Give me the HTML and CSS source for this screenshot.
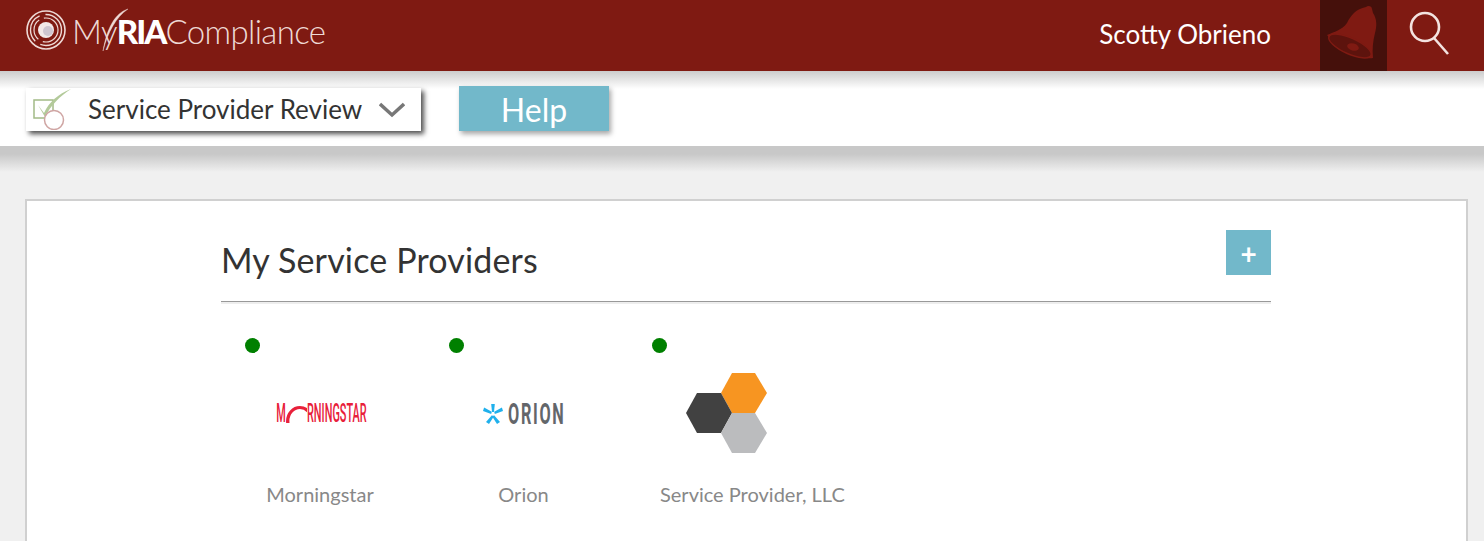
FILE: index.html
```html
<!DOCTYPE html>
<html lang="en">
<head>
  <meta charset="UTF-8">
  <title>My Service Providers - MyRIACompliance</title>
  <link rel="stylesheet" href="styles.css">
</head>
<body>

  <header class="topbar">
    <a class="brand" href="#">
      <svg class="brand-mark" width="42" height="42" viewBox="0 0 42 42" fill="none">
        <circle cx="21" cy="21" r="19" stroke="#eed9d5" stroke-width="1.6"/>
        <circle cx="21" cy="21" r="15.5" stroke="#eed9d5" stroke-width="1.4" stroke-dasharray="30 6"/>
        <circle cx="21" cy="21" r="12" stroke="#eed9d5" stroke-width="1.2" stroke-dasharray="22 5"/>
        <circle cx="21" cy="21" r="8" fill="#f3e9e8"/>
        <circle cx="23" cy="22" r="5" fill="#cfc6d0"/>
      </svg>
      <span class="brand-name">My<b>RIA</b>Compliance</span>
      <svg class="brand-swoosh" width="30" height="46" viewBox="0 0 30 46" fill="none">
        <path d="M30 1C17 5 9 20 5 43C10 24 18 9 30 1Z" fill="#eed9d5" stroke="#eed9d5" stroke-width="0.4"/>
      </svg>
    </a>
    <div class="user-name">Scotty Obrieno</div>
    <a class="bell" href="#">
      <svg width="67" height="71" viewBox="0 0 67 71">
        <path d="M46 7C48 5 52 6 52 9L53 13C57 19 57 26 55 33C53 41 52 49 53 58C43 60 20 52 7 35C14 32 22 30 27 23C31 15 36 9 46 7Z" fill="#7f1a12"/>
        <ellipse cx="30" cy="46" rx="23" ry="8" transform="rotate(24 30 46)" fill="#5d130d" stroke="#7f1a12" stroke-width="1.5"/>
        <ellipse cx="33" cy="47" rx="6" ry="3.5" transform="rotate(15 33 47)" fill="#7f1a12"/>
      </svg>
    </a>
    <a class="search" href="#">
      <svg width="40" height="50" viewBox="0 0 40 50" fill="none" stroke="#f3e3e0">
        <circle cx="16" cy="17" r="14" stroke-width="2.6"/>
        <path d="M25 28L39 44" stroke-width="2.6"/>
      </svg>
    </a>
  </header>

  <div class="subbar">
    <div class="module-select">
      <svg class="module-icon" width="40" height="42" viewBox="0 0 40 42" fill="none">
        <rect x="1" y="12" width="19" height="18" stroke="#a3bb87" stroke-width="1.5"/>
        <path d="M5 17L11 25C16 14 25 6 38 1C27 8 18 17 12 29Z" fill="#b3ca9a"/>
        <circle cx="21" cy="32" r="9.5" fill="#fff" stroke="#cfa5a3" stroke-width="1.5"/>
      </svg>
      <span class="module-name">Service Provider Review</span>
      <svg class="chevron" width="26" height="16" viewBox="0 0 26 16" fill="none">
        <path d="M1 2L13 13L25 2" stroke="#777" stroke-width="3.5"/>
      </svg>
    </div>
    <a class="help-btn" href="#">Help</a>
  </div>

  <main class="content">
    <section class="card">
      <div class="card-head">
        <h2>My Service Providers</h2>
        <a class="add-btn" href="#">+</a>
      </div>

      <div class="providers">
        <div class="provider">
          <span class="status"></span>
          <div class="logo">
            <div class="logo-ms"><span>M</span><i class="logo-ms-arc"></i><span>RNINGSTAR</span></div>
          </div>
          <div class="provider-name">Morningstar</div>
        </div>

        <div class="provider">
          <span class="status"></span>
          <div class="logo">
            <svg width="20" height="20" viewBox="0 0 20 20" fill="#1fb0ec">
              <path d="M8.2 0H11.8L11 8H9Z"/>
              <path d="M0 7L1.1 3.6L8.8 7.8L8.2 10Z"/>
              <path d="M20 7L18.9 3.6L11.2 7.8L11.8 10Z"/>
              <path d="M3 18L6 20L10.8 12.6L8.9 11.2Z"/>
              <path d="M17 18L14 20L9.2 12.6L11.1 11.2Z"/>
            </svg>
            <div class="logo-orion">ORION</div>
          </div>
          <div class="provider-name">Orion</div>
        </div>

        <div class="provider">
          <span class="status"></span>
          <div class="logo">
            <svg class="logo-hex" width="81" height="81" viewBox="0 0 81 81">
              <polygon points="35,20 46,0 69,0 81,20 69,40 46,40" fill="#f79521"/>
              <polygon points="0,40 11,20 35,20 46,40 35,60 11,60" fill="#414141"/>
              <polygon points="35,60 46,40 69,40 81,60 69,80 46,80" fill="#bbbcbe"/>
            </svg>
          </div>
          <div class="provider-name">Service Provider, LLC</div>
        </div>
      </div>
    </section>
  </main>

</body>
</html>
```

FILE: styles.css
```css
* {
  box-sizing: border-box;
}

html, body {
  height: 541px;
  margin: 0;
  overflow: hidden;
}

body {
  font-family: Lato, "Noto Sans", sans-serif;
  background-color: #f0f0f0;
  color: #333;
}

a {
  text-decoration: none;
  color: inherit;
}

/* top bar */
.topbar {
  display: flex;
  align-items: center;
  height: 71px;
  background-color: #7f1a12;
  color: white;
}

.brand {
  position: relative;
  display: flex;
  align-items: center;
  align-self: flex-start;
  margin-left: 25px;
  margin-right: auto;
  height: 59px;
  color: #eed9d5;
}

.brand-mark {
  flex: none;
}

.brand-name {
  margin-left: 5px;
  padding-top: 3px;
  font-size: 33px;
  font-weight: 300;
  letter-spacing: -0.65px;
}

.brand-name b {
  font-weight: 900;
  color: white;
  letter-spacing: -2px;
}

.brand-swoosh {
  position: absolute;
  left: 73px;
  top: 8px;
}

.user-name {
  font-size: 26px;
  margin-right: 49px;
  padding-bottom: 4px;
}

.bell {
  display: block;
  width: 67px;
  height: 71px;
  background-color: #45100b;
}

.search {
  display: block;
  align-self: flex-start;
  margin-left: 22px;
  margin-right: 35px;
  padding-top: 10px;
}

/* module bar */
.subbar {
  display: flex;
  align-items: flex-start;
  height: 75px;
  padding: 15px 0 0 26px;
  background: linear-gradient(#ccc, #fff 18px);
}

.module-select {
  display: flex;
  align-items: center;
  width: 395px;
  height: 43px;
  margin-top: 2px;
  padding-left: 7px;
  background-color: white;
  box-shadow: 3px 3px 5px rgba(0,0,0,0.7);
}

.module-icon {
  flex: none;
  margin-bottom: 2px;
}

.module-name {
  margin-left: 15px;
  padding-bottom: 2px;
  font-size: 26px;
  white-space: nowrap;
}

.chevron {
  margin-left: auto;
  margin-right: 16px;
}

.help-btn {
  width: 150px;
  height: 45px;
  margin-left: 38px;
  background-color: #72b8ca;
  color: white;
  font-size: 32px;
  line-height: 47px;
  text-align: center;
  box-shadow: 2px 3px 5px rgba(0,0,0,0.35);
}

/* content */
.content {
  padding: 53px 16px 0 25px;
  background: linear-gradient(#c8c8c8, #c8c8c8 8px, #f0f0f0 26px) no-repeat;
}

.card {
  height: 342px;
  padding: 29px 195px 0 194px;
  background-color: white;
  border: 2px solid #d0d0d0;
  border-bottom: none;
}

.card-head {
  display: flex;
  justify-content: space-between;
  height: 72px;
  border-bottom: 1px solid #999;
  box-shadow: 0 2px 0 #eee;
}

.card-head h2 {
  margin: 8px 0 0;
  font-size: 34px;
  font-weight: 400;
  letter-spacing: 0.15px;
  line-height: 44px;
}

.add-btn {
  width: 45px;
  height: 45px;
  background-color: #72b8ca;
  color: white;
  font-size: 28px;
  font-weight: 700;
  line-height: 47px;
  text-align: center;
}

.providers {
  display: grid;
  grid-template-columns: repeat(5, 203.5px);
  padding-top: 36px;
}

.provider {
  padding-left: 24px;
}

.status {
  display: block;
  width: 15px;
  height: 15px;
  border-radius: 50%;
  background-color: green;
}

.logo {
  display: flex;
  align-items: center;
  justify-content: center;
  width: 150px;
  height: 81px;
  margin-top: 20px;
}

.provider-name {
  width: 134px;
  margin: 27px 8px 0;
  font-size: 20px;
  line-height: 26px;
  text-align: center;
  white-space: nowrap;
  color: #888;
}

/* partner logos */
.logo-ms {
  display: flex;
  align-items: flex-end;
  flex: none;
  height: 19px;
  margin-left: 3px;
  color: #e8203a;
  font-family: Roboto, sans-serif;
  font-size: 26px;
  font-weight: 500;
  line-height: 19px;
  transform: scaleX(0.42);
}

/* the ring of the O, cut off by the baseline */
.logo-ms-arc {
  display: block;
  width: 50px;
  height: 17px;
  overflow: hidden;
}

.logo-ms-arc::before {
  content: "";
  display: block;
  width: 50px;
  height: 24px;
  border-style: solid;
  border-color: #e8203a;
  border-width: 3px 8px;
  border-radius: 50%;
}

.logo-orion {
  flex: none;
  width: 57px;
  margin-left: 5px;
  color: #63666a;
  font-family: Roboto, sans-serif;
  font-size: 29px;
  font-weight: 700;
  letter-spacing: 3px;
  line-height: 24px;
  transform: scaleX(0.56);
  transform-origin: left;
}

.logo-hex {
  margin-left: -2px;
}
```
